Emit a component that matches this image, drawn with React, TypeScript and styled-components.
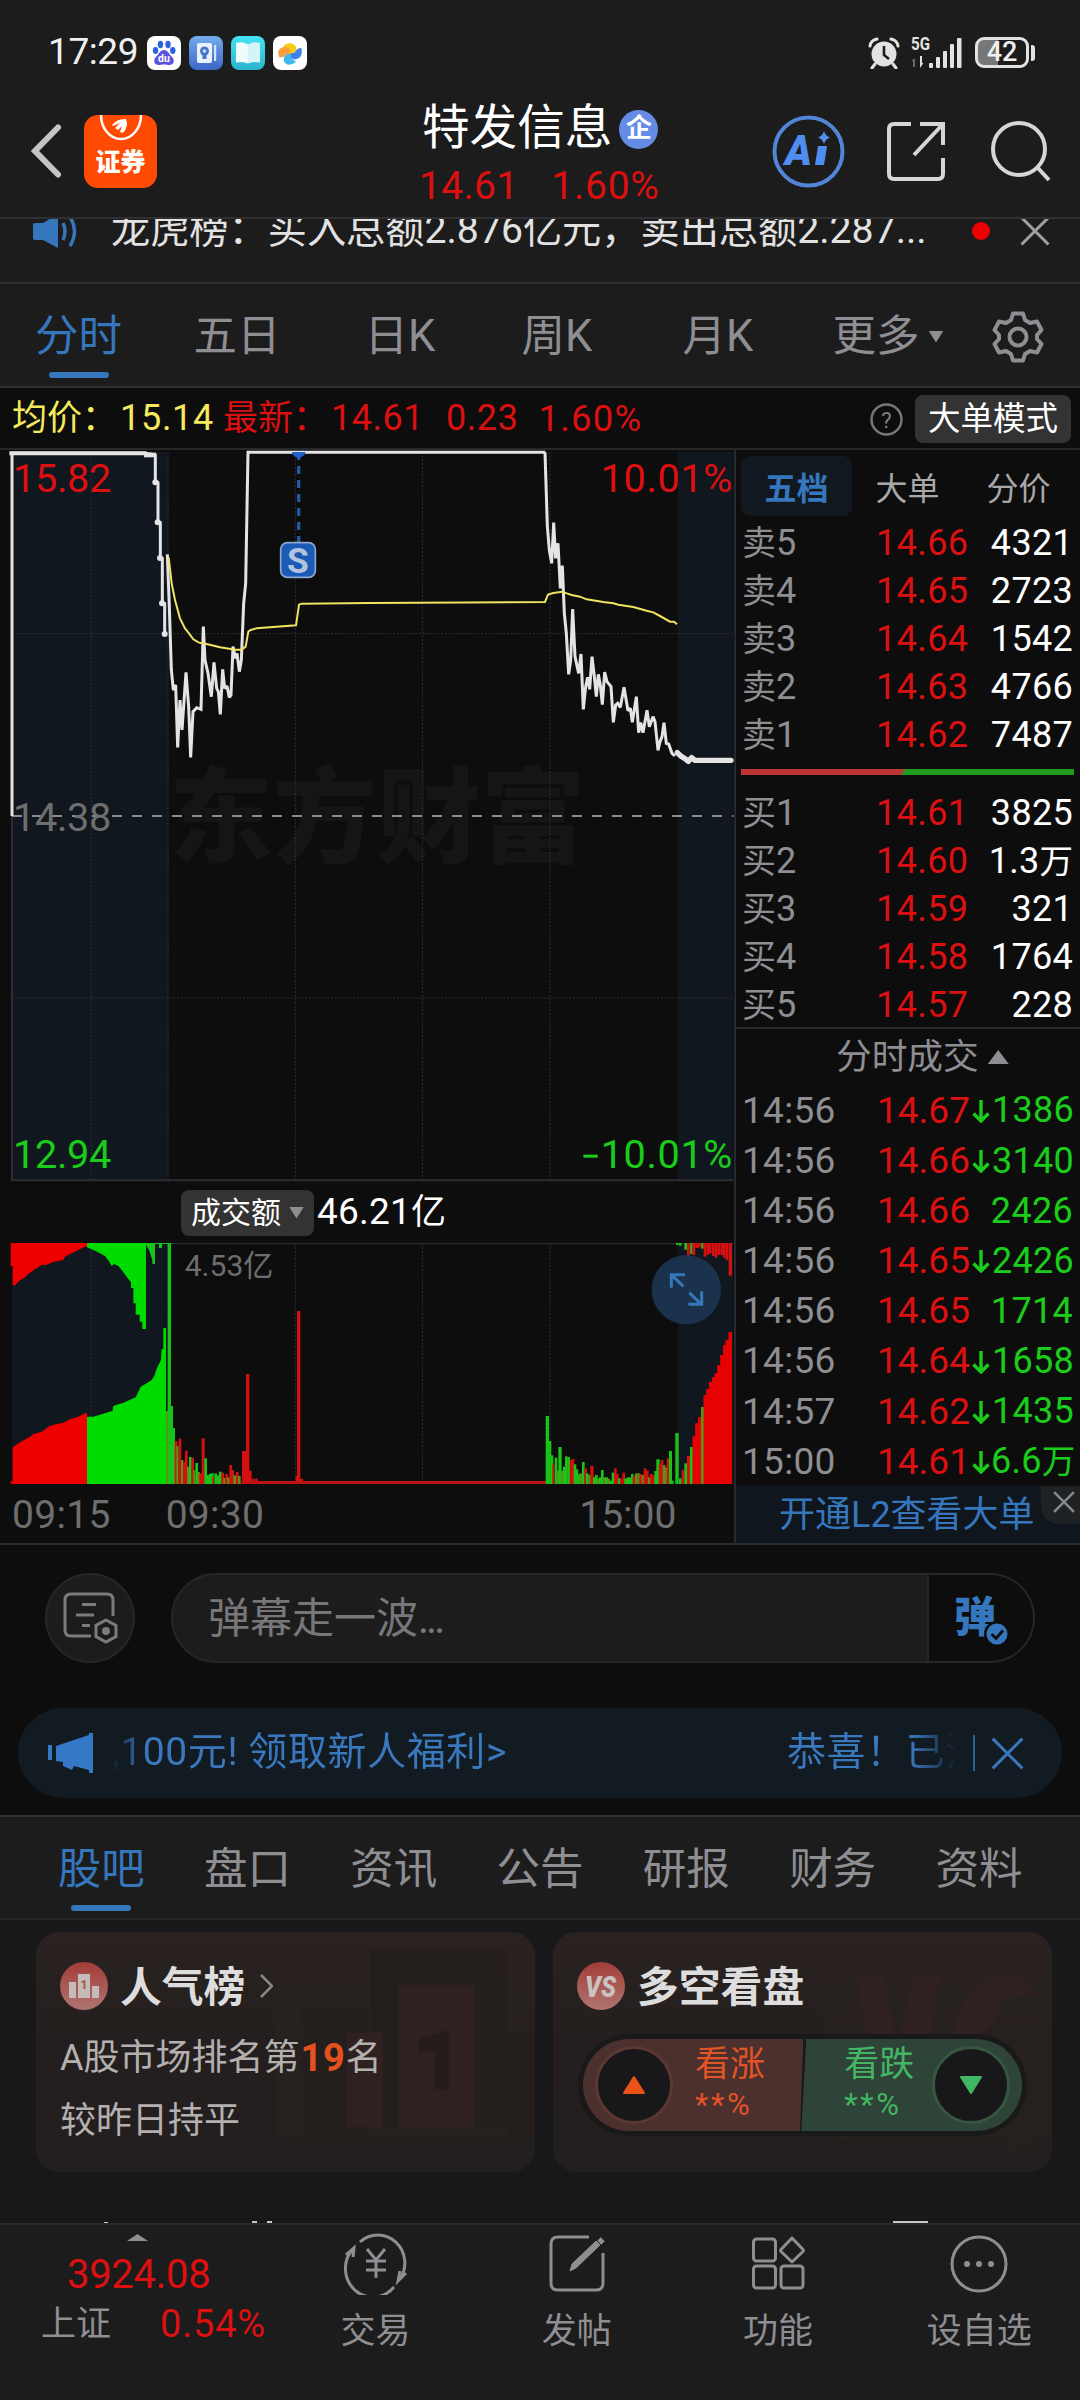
import React from "react";
import styled, { createGlobalStyle } from "styled-components";

const C = {
  bg: "#0d0d0d",
  panel: "#1c1c1c",
  line: "#303032",
  red: "#dc1010",
  green: "#1acd1a",
  blue: "#3576bd",
  gray: "#8e8e93",
  dim: "#6e6e6e",
  light: "#e2e2e2",
};

const GlobalStyle = createGlobalStyle`
  * { box-sizing: border-box; }
  html, body { margin: 0; padding: 0; background: ${C.bg}; }
  body { font-family: Roboto, "Noto Sans CJK SC", sans-serif; overflow: hidden; }
  svg { display: block; flex: none; }
`;

const Page = styled.div`
  width: 1080px;
  height: 2400px;
  display: flex;
  flex-direction: column;
  overflow: hidden;
  background: ${C.bg};
  color: #fff;
`;

interface TxtProps {
  $s: number;
  $c?: string;
  $w?: number;
  $ls?: number;
  $ml?: number;
}
const Txt = styled.span<TxtProps>`
  flex: none;
  font-size: ${(p) => p.$s}px;
  line-height: 1.2;
  color: ${(p) => p.$c ?? "#fff"};
  font-weight: ${(p) => p.$w ?? 400};
  letter-spacing: ${(p) => p.$ls ?? 0}px;
  margin-left: ${(p) => p.$ml ?? 0}px;
  white-space: pre;
`;

/* ---------- status bar ---------- */
const StatusBar = styled.div`
  height: 100px;
  flex: none;
  padding: 5px 45px 0 48px;
  display: flex;
  align-items: center;
  background: ${C.panel};
`;
const AppIcons = styled.div`
  display: flex;
  gap: 8px;
  margin-left: 9px;
`;
const StatusRight = styled.div`
  display: flex;
  align-items: center;
  margin-left: auto;
`;
const SignalBox = styled.svg`
  margin: 0 13px 0 11px;
  overflow: visible;
`;
const Battery = styled.div`
  width: 54px;
  height: 31px;
  border: 3px solid ${C.light};
  border-radius: 9px;
  display: flex;
  align-items: center;
  justify-content: center;
  background: linear-gradient(90deg, #777 0 42%, transparent 42%);
`;
const BatteryNub = styled.div`
  width: 4px;
  height: 16px;
  margin-left: 2px;
  border-radius: 0 3px 3px 0;
  background: ${C.light};
`;

/* ---------- header ---------- */
const Header = styled.header`
  height: 119px;
  flex: none;
  display: grid;
  grid-template-columns: 421px 1fr 310px;
  background: ${C.panel};
  border-bottom: 2px solid ${C.line};
`;
const HeaderLeft = styled.div`
  display: flex;
  padding: 15px 0 0 31px;
`;
const BackIcon = styled.svg`
  margin: 9px 22px 0 0;
`;
const HeaderMid = styled.div`
  display: flex;
  flex-direction: column;
`;
const TitleRow = styled.div`
  display: flex;
  align-items: center;
  height: 57px;
  padding: 1px 0 0 1px;
`;
const Badge = styled.div`
  width: 39px;
  height: 39px;
  margin-left: 7px;
  border-radius: 50%;
  background: #658ce4;
  display: flex;
  align-items: center;
  justify-content: center;
`;
const PriceRow = styled.div`
  display: flex;
  align-items: center;
  height: 46px;
  margin-top: 6px;
`;
const HeaderRight = styled.div`
  display: flex;
  padding-top: 15px;
`;

/* ---------- notice ---------- */
const Notice = styled.div`
  height: 65px;
  flex: none;
  overflow: hidden;
  background: ${C.panel};
  border-bottom: 2px solid ${C.line};
`;
const NoticeInner = styled.div`
  display: flex;
  align-items: center;
  height: 60px;
  margin-top: -18px;
  padding: 0 30px 0 33px;
`;
const Dot = styled.div`
  width: 18px;
  height: 18px;
  flex: none;
  border-radius: 50%;
  background: #ee0000;
  margin: 0 30px 0 auto;
`;

/* ---------- period tabs ---------- */
const Periods = styled.nav`
  height: 104px;
  flex: none;
  display: grid;
  grid-template-columns: 157px 160px 166px 148px 174px 166px 94px;
  background: ${C.panel};
  border-bottom: 2px solid ${C.line};
`;
const Tab = styled.div<{ $active?: boolean }>`
  display: flex;
  align-items: center;
  justify-content: center;
  padding-top: 3px;
  color: ${(p) => (p.$active ? C.blue : C.gray)};
  font-size: 43.5px;
  line-height: 99px;
  white-space: nowrap;
  position: relative;
  &::after {
    content: "";
    display: ${(p) => (p.$active ? "block" : "none")};
    position: absolute;
    bottom: 8px;
    width: 60px;
    height: 6px;
    border-radius: 3px;
    background: ${C.blue};
  }
`;
const Caret = styled.span<{ $up?: boolean; $w: number; $h: number; $ml: number }>`
  flex: none;
  width: ${(p) => p.$w}px;
  height: ${(p) => p.$h}px;
  margin-left: ${(p) => p.$ml}px;
  background: ${C.gray};
  clip-path: ${(p) => (p.$up ? "polygon(50% 0, 100% 100%, 0 100%)" : "polygon(0 0, 100% 0, 50% 100%)")};
`;

/* ---------- info row ---------- */
const InfoRow = styled.div`
  height: 62px;
  flex: none;
  display: flex;
  align-items: center;
  padding: 2px 9px 0 12px;
  border-bottom: 2px solid #282828;
`;
const Mode = styled.div`
  width: 156px;
  height: 48px;
  margin-left: 12px;
  border-radius: 8px;
  background: #333;
  display: flex;
  align-items: center;
  justify-content: center;
`;

/* ---------- main ---------- */
const Main = styled.section`
  height: 1095px;
  flex: none;
  display: grid;
  grid-template-columns: 734px 346px;
  border-bottom: 2px solid #2b2b2c;
`;
const ChartCol = styled.div`
  display: flex;
  flex-direction: column;
`;
const VolumeHead = styled.div`
  height: 61px;
  flex: none;
  display: flex;
  align-items: center;
  padding-left: 181px;
`;
const VolumeChip = styled.div`
  width: 133px;
  height: 46px;
  border-radius: 8px;
  background: #333;
  display: flex;
  align-items: center;
  padding-left: 10px;
`;
const Axis = styled.div`
  height: 57px;
  display: flex;
  align-items: center;
  padding: 4px 0 0 12px;
`;
const BookCol = styled.div`
  border-left: 2px solid #29292b;
  display: flex;
  flex-direction: column;
`;
const BookTabs = styled.div`
  display: grid;
  grid-template-columns: 111px 1fr 1fr;
  height: 60px;
  flex: none;
  margin: 6px 6px 2px 5px;
`;
const BookTab = styled.div<{ $active?: boolean }>`
  display: flex;
  align-items: center;
  justify-content: center;
  border-radius: 9px;
  font-size: 32px;
  font-weight: ${(p) => (p.$active ? 700 : 400)};
  background: ${(p) => (p.$active ? "#11181f" : "transparent")};
  color: ${(p) => (p.$active ? C.blue : "#a8a8a8")};
`;
const BookRow = styled.div`
  height: 48px;
  flex: none;
  display: grid;
  grid-template-columns: 134px 100px 1fr;
  align-items: center;
  padding: 3px 7px 0 6px;
`;
const TradeRow = styled(BookRow)`
  height: 50.13px;
  padding-top: 2px;
  grid-template-columns: 135px 95px 1fr;
`;
const Right = styled.div`
  display: flex;
  justify-content: flex-end;
  align-items: center;
`;
const RatioBar = styled.div`
  display: flex;
  height: 6px;
  flex: none;
  margin: 11px 6px 13px 5px;
  background: linear-gradient(125deg, #bd3534 0 48.6%, #1e9a1e 48.8%);
`;
const TradeHead = styled.div`
  height: 58px;
  flex: none;
  margin-top: -1px;
  border-top: 2px solid #29292b;
  display: flex;
  align-items: center;
  padding-left: 100px;
`;
const L2Bar = styled.div`
  flex: 1;
  display: flex;
  background: #10161d;
  padding: 3px 0 0 43px;
  align-items: center;
`;
const L2Close = styled.div`
  width: 39px;
  height: 38px;
  margin: -3px 0 0 auto;
  padding: 0 0 6px 6px;
  align-self: flex-start;
  border-radius: 0 0 0 18px;
  background: #1f2225;
  display: flex;
  align-items: center;
  justify-content: center;
`;

/* ---------- danmu ---------- */
const DanmuRow = styled.div`
  display: flex;
  flex: none;
  height: 90px;
  margin: 28px 45px 0 45px;
`;
const RoundButton = styled.div`
  width: 90px;
  height: 90px;
  border-radius: 50%;
  border: 2px solid #262626;
  background: ${C.panel};
  display: flex;
  align-items: center;
  justify-content: center;
`;
const DanmuField = styled.div`
  flex: 1;
  margin-left: 36px;
  display: flex;
  align-items: center;
  border: 2px solid #262626;
  border-radius: 45px;
  background: ${C.panel};
  overflow: hidden;
  padding-left: 35px;
`;
const DanmuHint = styled.div`
  display: flex;
  padding-top: 2px;
`;
const DanmuToggle = styled.div`
  width: 106px;
  height: 100%;
  margin-left: auto;
  padding-left: 25px;
  display: flex;
  align-items: center;
  background: ${C.bg};
  border-left: 2px solid #262626;
`;
const CheckBadge = styled.svg`
  margin: 32px 0 0 -12px;
`;

/* ---------- promo ---------- */
const Promo = styled.div`
  height: 90px;
  flex: none;
  margin: 45px 18px 17px;
  border-radius: 45px;
  background: #121a22;
  display: flex;
  align-items: center;
  padding: 0 38px 0 30px;
`;
const Marquee = styled.div`
  width: 850px;
  margin: -2px 0 0 17px;
  display: flex;
  overflow: hidden;
  mask-image: linear-gradient(90deg, transparent 0, #000 34px, #000 800px, transparent 846px);
`;
const VLine = styled.div`
  width: 2px;
  height: 36px;
  margin: 0 16px 0 13px;
  background: #2d6299;
`;

/* ---------- section tabs ---------- */
const Sections = styled.nav`
  height: 105px;
  flex: none;
  display: grid;
  grid-template-columns: repeat(7, 146.3px);
  padding-left: 28px;
  background: ${C.panel};
  border-top: 2px solid #323232;
  border-bottom: 2px solid #2b2728;
`;

/* ---------- cards ---------- */
const Cards = styled.section`
  height: 305px;
  flex: none;
  display: flex;
  flex-direction: column;
  justify-content: space-between;
  background: #18181a;
  border-bottom: 2px solid #2a2a28;
`;
const CardGrid = styled.div`
  display: grid;
  grid-template-columns: 499px 499px;
  column-gap: 18px;
  padding: 12px 0 0 36px;
`;
const Card = styled.div`
  height: 240px;
  border-radius: 24px;
  background: linear-gradient(180deg, #292221 0%, #241f1e 45%, #231f1e 100%);
  position: relative;
  overflow: hidden;
`;
const CardArt = styled.svg`
  position: absolute;
  right: 0;
  top: 0;
`;
const CardBody = styled.div`
  position: relative;
  padding: 26px 0 0 24px;
`;
const CardTitle = styled.div`
  display: flex;
  align-items: center;
  height: 56px;
`;
const CardName = styled.div`
  margin-left: 12px;
  padding-top: 3px;
  font-size: 41.8px;
  line-height: 50px;
  font-weight: 700;
  color: #dedddd;
`;
const CardLine = styled.div<{ $mt: number }>`
  display: flex;
  align-items: center;
  height: 50px;
  margin-top: ${(p) => p.$mt}px;
`;
const Vote = styled.div`
  display: flex;
  width: 449px;
  height: 102px;
  margin-top: 20px;
  margin-left: 1px;
  padding: 5px;
  border-radius: 51px;
  background: #1a191a;
`;
const VoteSide = styled.div<{ $down?: boolean }>`
  width: 223px;
  height: 92px;
  display: flex;
  align-items: center;
  background: ${(p) => (p.$down ? "#2f4438" : "#4b302e")};
  border-radius: ${(p) => (p.$down ? "0 46px 46px 0" : "46px 0 0 46px")};
  clip-path: ${(p) => (p.$down ? "polygon(5px 0, 100% 0, 100% 100%, 0 100%)" : "polygon(0 0, 100% 0, 217px 100%, 0 100%)")};
  margin-right: ${(p) => (p.$down ? 0 : -2)}px;
  padding-left: ${(p) => (p.$down ? 43 : 12)}px;
`;
const VoteCircle = styled.div<{ $down?: boolean }>`
  width: 78px;
  height: 78px;
  flex: none;
  border-radius: 50%;
  border: 3px solid ${(p) => (p.$down ? "#37563f" : "#5c3832")};
  background: #18181a;
  display: flex;
  align-items: center;
  justify-content: center;
  margin-left: ${(p) => (p.$down ? 18 : 0)}px;
`;
const VoteText = styled.div<{ $ml: number }>`
  display: flex;
  flex-direction: column;
  width: 70px;
  margin-left: ${(p) => p.$ml}px;
  margin-top: -3px;
`;

/* ---------- bottom nav ---------- */
const BottomNav = styled.nav`
  flex: 1;
  display: grid;
  grid-template-columns: 275px repeat(4, 201.2px);
  background: ${C.panel};
`;
const IndexCell = styled.div`
  display: flex;
  flex-direction: column;
  padding-top: 9px;
`;
const IndexRow = styled.div<{ $mt: number; $pl: number }>`
  display: flex;
  align-items: center;
  height: 46px;
  margin-top: ${(p) => p.$mt}px;
  padding-left: ${(p) => p.$pl}px;
`;
const NavItem = styled.div`
  display: flex;
  flex-direction: column;
  align-items: center;
  padding-top: 8px;
`;
const NavLabel = styled.div`
  margin-top: 16px;
  font-size: 35px;
  line-height: 42px;
  color: ${C.gray};
`;

/* ---------- chart data (three units per pixel) ---------- */
const AUCTION =
  "36,1128 36,40 435,40 466,44 466,127 474,127 474,247 481,247 481,354 487,354 487,490 494,490 494,582";
const PRICE_A =
  "502,343 508,500 514,690 520,750 527,735 533,922 540,780 546,870 558,697 566,800 572,952 579,815 590,803 603,808 610,560 615,660 624,700 634,770 642,667 650,745 655,755 661,823 668,688 674,745 681,738 688,772 693,765 699,620 706,655 711,640 718,695 724,660 731,490 737,430 744,37 1636,37";
const PRICE_B =
  "525,37 532,258 538,330 545,370 551,248 557,355 564,310 571,445 577,377 583,520 589,580 596,703 602,660 608,507 615,650 626,700 633,642 640,808 647,740 653,712 659,748 666,650 673,710 679,770 685,703 691,735 697,794 704,696 711,725 723,740 730,847 737,795 743,790 751,802 762,742 774,812 781,805 787,847 799,770 806,878 812,848 819,878 831,811 838,860 849,830 855,845 864,931 870,905 876,890 882,848 889,910 896,912 906,940 915,948";
const CLOSE_LINE = "922,938 935,950 944,955 955,964 965,953 975,961 1083,961";
const AVG_A =
  "506,352 515,430 525,480 540,535 555,565 567,580 580,598 597,608 620,612 660,622 706,629 725,629 737,620 745,575 752,570 770,565 888,556 897,494 905,491 1110,489";
const AVG_B =
  "0,489 525,486 534,464 550,459 576,455 590,460 605,465 630,470 650,478 700,486 730,490 745,494 790,501 830,512 850,517 870,528 900,545 912,545 921,553";
const STEPS = [[466, 127], [473, 247], [480, 354], [486, 490], [494, 582]];

type Bar = [number, number, "r" | "g" | "o", number?];
const BAR_FILL = { r: "#d41010", g: "#18c418", o: "#5f9016" };
const MORNING: Bar[] = [
  [498, 843, "o", 6], [503, 342, "g", 10], [511, 828, "g"], [517, 894, "g"], [524, 933, "r"], [529, 948, "o", 7], [536, 926, "r"],
  [543, 990, "o", 7], [549, 995, "r"], [555, 962, "r"], [561, 1010, "o", 6], [567, 981, "g"], [574, 983, "r"], [580, 1020, "o", 6],
  [586, 999, "g"], [592, 1026, "o"], [598, 1030, "r"], [605, 925, "r", 9], [613, 985, "g"], [619, 1035, "g"], [627, 1031, "g"],
  [633, 1030, "g"], [637, 1040, "r", 6], [643, 1030, "g"], [650, 1036, "g"], [657, 1025, "g"], [664, 1028, "r"], [670, 1044, "o"],
  [676, 1032, "r"], [682, 1042, "o"], [688, 1005, "r"], [694, 1020, "r"], [700, 1036, "o"], [708, 1026, "r"], [714, 1038, "o"],
  [726, 963, "r", 14], [738, 732, "r", 10], [747, 1022, "r"], [755, 1046, "r"], [765, 1046, "r"], [887, 1038, "r"],
  [891, 543, "r", 10], [901, 1046, "r"],
];
const AFTERNOON: Bar[] = [
  [527, 858, "g", 10], [536, 933, "g"], [542, 976, "g"], [547, 1000, "r", 6], [554, 983, "g"], [560, 1022, "o"], [565, 951, "g", 10],
  [573, 1022, "o"], [579, 1010, "g"], [585, 979, "g"], [592, 981, "g"], [599, 990, "r"], [605, 987, "r"], [611, 1003, "g"],
  [617, 1018, "g"], [623, 1033, "g"], [629, 1030, "o"], [636, 996, "g"], [643, 1015, "r"], [648, 1030, "g"], [655, 1035, "o"],
  [661, 1008, "r", 10], [669, 1042, "g"], [675, 1035, "g"], [681, 1045, "o"], [687, 1042, "g"], [693, 1020, "g"], [700, 1042, "o"],
  [706, 1042, "g"], [712, 1046, "o"], [719, 1052, "g"], [725, 1028, "g"], [732, 1015, "r"], [738, 1032, "r"], [744, 1045, "g"],
  [750, 1045, "r"], [757, 1028, "r"], [763, 1045, "g"], [770, 1042, "g"], [776, 1042, "g"], [783, 1032, "g"], [788, 1038, "r"],
  [795, 1030, "o"], [802, 1030, "o"], [808, 1032, "r"], [815, 1035, "o"], [821, 1015, "r"], [828, 1022, "r"], [834, 1042, "o"],
  [840, 1032, "r"], [847, 1036, "r"], [853, 1023, "g"], [859, 988, "g", 10], [866, 1003, "r"], [872, 990, "r"], [878, 1005, "o"],
  [884, 1012, "o"], [890, 985, "r"], [897, 963, "g", 9], [903, 1052, "g"], [916, 909, "g", 10], [927, 1045, "g"], [935, 1020, "r"],
  [943, 1000, "g"], [951, 978, "r", 9], [960, 951, "g", 9],
];
const CLOSE_BARS: Bar[] = [
  [968, 919, "r"], [976, 880, "r"], [984, 862, "r"], [993, 831, "o", 9], [1001, 795, "r"], [1009, 777, "r"], [1017, 755, "r"],
  [1026, 741, "r"], [1034, 730, "r"], [1042, 706, "r"], [1051, 675, "r"], [1059, 645, "r"], [1067, 630, "r"], [1076, 606, "r", 10],
];
const TOP_BARS: Bar[] = [
  [918, 345, "g"], [927, 347, "g"], [943, 359, "g"], [951, 387, "r"], [960, 372, "o"], [968, 375, "r"], [976, 354, "r"],
  [984, 352, "r"], [993, 356, "o"], [1001, 380, "r"], [1009, 375, "r"], [1017, 370, "r"], [1026, 378, "r"], [1034, 383, "r"],
  [1042, 375, "r"], [1051, 375, "r"], [1059, 383, "r"], [1067, 390, "r"], [1076, 437, "r", 10],
];
const GRID_X = [274, 504, 886, 1267, 1650];

function PriceChart() {
  return (
    <svg width="734" height="732" viewBox="0 30 2202 2196" fontFamily='Roboto, "Noto Sans CJK SC", sans-serif'>
      <rect x="36" y="36" width="470" height="2186" fill="#10171f" />
      <rect x="2033" y="36" width="167" height="2186" fill="#10171f" />
      <text x="507" y="1244" fontSize="312" fontWeight="900" fill="#151515">东方财富</text>
      <g stroke="#2c3034" strokeWidth="3" strokeDasharray="6 5">
        {GRID_X.map((x) => (
          <line key={x} x1={x} x2={x} y1="36" y2="2222" />
        ))}
        <line x1="36" x2="2200" y1="581" y2="581" />
        <line x1="36" x2="2200" y1="1674" y2="1674" />
      </g>
      <path d="M36 36V2221H2200" fill="none" stroke="#2e2e30" strokeWidth="6" />
      <line x1="36" x2="2200" y1="1128" y2="1128" stroke="#8c8c8c" strokeWidth="6" strokeDasharray="30 30" />
      <g fontSize="119">
        <text x="39" y="157" fill={C.red} textLength="295">15.82</text>
        <text x="39" y="1172" fill={C.dim} textLength="295">14.38</text>
        <text x="39" y="2185" fill={C.green} textLength="295">12.94</text>
        <text x="1802" y="157" fill={C.red} textLength="395">10.01%</text>
        <text x="1802" y="2185" fill={C.green} textLength="395">10.01%</text>
        <rect x="1750" y="2144" width="43" height="9" fill={C.green} />
      </g>
      <line x1="896" x2="896" y1="48" y2="308" stroke="#2259a3" strokeWidth="10" strokeDasharray="24 18" strokeDashoffset="12" />
      <g fill="none" stroke="#e4e4e4" strokeLinejoin="round">
        <polyline points={AUCTION} strokeWidth="9" />
        <polyline points="28,40 440,40" strokeWidth="12" />
        <polyline points="432,45 468,45" strokeWidth="14" />
        <polyline points={PRICE_A} strokeWidth="9" strokeLinejoin="miter" strokeMiterlimit="2" />
        <g transform="translate(1110 0)">
          <polyline points={PRICE_B} strokeWidth="9" strokeLinejoin="miter" strokeMiterlimit="2" />
          <polyline points={CLOSE_LINE} strokeWidth="16" strokeLinecap="round" />
        </g>
      </g>
      {STEPS.map(([x, y]) => (
        <circle key={y} cx={x} cy={y} r="9" fill="#e4e4e4" />
      ))}
      <g fill="none" stroke="#efe462" strokeWidth="6">
        <polyline points={AVG_A} />
        <polyline points={AVG_B} transform="translate(1110 0)" />
      </g>
      <path d="M876 36h40q0 12-20 19q-20-7-20-19z" fill="#1f62c8" />
      <rect x="842" y="308" width="104" height="104" rx="20" fill="#195bb6" stroke="#8fa7cc" strokeWidth="5" />
      <text x="894" y="398" fontSize="106" fontWeight="700" fill="#b3c3dd" textAnchor="middle">S</text>
    </svg>
  );
}

function bars(list: Bar[], top = false) {
  return list.map(([x, y, c, w], i) => (
    <rect key={i} x={x} y={top ? 339 : y} width={w ?? 8} height={top ? y - 339 : 1062 - y} fill={BAR_FILL[c]} />
  ));
}

function VolumeChart() {
  return (
    <svg width="734" height="242" viewBox="0 339 2202 726" fontFamily='Roboto, "Noto Sans CJK SC", sans-serif'>
      <rect x="36" y="339" width="470" height="723" fill="#10171f" />
      <rect x="2033" y="339" width="167" height="723" fill="#10171f" />
      <line x1="36" x2="2200" y1="341" y2="341" stroke="#2e2e30" strokeWidth="4" />
      <g stroke="#2c3034" strokeWidth="3" strokeDasharray="6 5">
        {GRID_X.map((x) => (
          <line key={x} x1={x} x2={x} y1="340" y2="1062" />
        ))}
      </g>
      <polygon fill="#ee0000" points="32,339 261,339 261,350 250,352 235,360 210,372 195,380 190,390 160,396 145,402 135,406 125,404 105,418 85,432 75,442 58,452 45,466 38,466 38,408 32,408" />
      <polygon fill="#00dc00" points="261,339 438,339 438,597 427,597 427,575 419,575 419,554 407,554 407,520 400,520 400,474 393,474 393,457 380,440 365,420 355,408 342,402 335,408 328,395 315,378 300,370 285,362 261,352" />
      <polygon fill="#18c418" points="438,339 515,339 515,342 486,342 486,354 477,354 477,342 465,342 465,402 457,402 457,390 453,378 447,360 442,352 438,345" />
      <polygon fill="#ee0000" points="32,1062 32,1053 38,1053 38,952 60,937 90,920 100,912 125,905 145,890 160,884 190,878 210,868 235,860 250,852 261,848 261,1062" />
      <polygon fill="#00dc00" points="261,860 280,860 300,854 338,842 340,828 370,818 407,802 415,785 422,770 440,760 455,750 463,738 470,716 478,700 483,690 485,657 490,657 490,594 498,594 498,1062 261,1062" />
      {bars(MORNING)}
      <rect x="724" y="1053" width="916" height="9" fill="#c01414" />
      <g transform="translate(1110 0)">
        {bars(AFTERNOON)}
        <path
          d="M968 1062V919h8V880h8V862h17V795h8V777h8V755h9V741h8V730h8V706h9V675h8V645h8V630h9V606h10V1062z"
          fill="#ee0000"
        />
        {CLOSE_BARS.map(([x, y, c, w]) => (
          <rect key={x} x={x} y={y} width={c === "o" ? w : 2} height={1062 - y} fill={c === "o" ? "#5f9016" : "#cc0808"} />
        ))}
        {bars(TOP_BARS, true)}
        <circle cx="949" cy="479" r="104" fill="#1c3450" fillOpacity="0.94" />
        <path
          d="M904 473V434H945M906 436L940 469M958 488L996 525M955 523H995V484"
          fill="none"
          stroke="#3576bd"
          strokeWidth="9"
        />
      </g>
      <text x="554" y="438" fontSize="90" fill={C.dim} textLength="266">4.53亿</text>
    </svg>
  );
}

const ASKS = [["卖5", "14.66", "4321"], ["卖4", "14.65", "2723"], ["卖3", "14.64", "1542"], ["卖2", "14.63", "4766"], ["卖1", "14.62", "7487"]];
const BIDS = [["买1", "14.61", "3825"], ["买2", "14.60", "1.3万"], ["买3", "14.59", "321"], ["买4", "14.58", "1764"], ["买5", "14.57", "228"]];
const TRADES: [string, string, string, boolean][] = [
  ["14:56", "14.67", "1386", true],
  ["14:56", "14.66", "3140", true],
  ["14:56", "14.66", "2426", false],
  ["14:56", "14.65", "2426", true],
  ["14:56", "14.65", "1714", false],
  ["14:56", "14.64", "1658", true],
  ["14:57", "14.62", "1435", true],
  ["15:00", "14.61", "6.6万", true],
];

const Amount = ({ value, color }: { value: string; color: string }) => {
  const unit = value.endsWith("万");
  return (
    <Txt $s={36} $c={color} $ls={0.3} $ml={unit ? 1 : 2}>
      {unit ? value.slice(0, -1) : value}
      {unit && <Txt $s={33.5} $c={color}>万</Txt>}
    </Txt>
  );
};

const BookLine = ({ row }: { row: string[] }) => (
  <BookRow>
    <Txt $s={36} $c={C.gray}>
      <Txt $s={34} $c={C.gray}>{row[0][0]}</Txt>
      {row[0][1]}
    </Txt>
    <Txt $s={36} $c={C.red} $ls={0.4}>{row[1]}</Txt>
    <Right>
      <Amount value={row[2]} color="#fff" />
    </Right>
  </BookRow>
);

const DownArrow = () => (
  <svg width="18" height="24" viewBox="0 0 18 24" fill="none" stroke={C.green} strokeWidth="3.4">
    <path d="M9 1V22M1.5 14.5L9 22L16.5 14.5" />
  </svg>
);

const Cross = ({ size, color, w = 3 }: { size: number; color: string; w?: number }) => (
  <svg width={size} height={size} viewBox="0 0 30 30" stroke={color} strokeWidth={(w * 30) / size}>
    <path d="M1.5 1.5L28.5 28.5M28.5 1.5L1.5 28.5" />
  </svg>
);

function AppIconRow() {
  return (
    <AppIcons>
      <svg width="34" height="34" viewBox="0 0 34 34">
        <rect width="34" height="34" rx="8" fill="#fff" />
        <g fill="#2a62e0">
          <ellipse cx="13.5" cy="8.5" rx="2.7" ry="3.7" />
          <ellipse cx="21" cy="8.5" rx="2.7" ry="3.7" />
          <ellipse cx="8.5" cy="14.5" rx="2.7" ry="3.4" />
          <ellipse cx="25.8" cy="14.5" rx="2.7" ry="3.4" />
          <path d="M17 14c4 0 5 4 8 7c3.500 3.500 1.500 8-2.500 8c-2 0-3-.5-5.500-.5s-3.500 .5-5.500 .5c-4 0-6-4.500-2.500-8c3-3 4-7 8-7z" fill="#5a55de" />
        </g>
        <text x="17" y="26" fontSize="10.500" fontWeight="700" fill="#fff" textAnchor="middle">du</text>
      </svg>
      <svg width="34" height="34" viewBox="0 0 34 34">
        <defs>
          <linearGradient id="ib" x2="0" y2="1"><stop stopColor="#74adea" /><stop offset="1" stopColor="#3c66c8" /></linearGradient>
          <linearGradient id="ic" x2="0" y2="1"><stop stopColor="#45e4f4" /><stop offset="1" stopColor="#2cb4cc" /></linearGradient>
        </defs>
        <rect width="34" height="34" rx="8" fill="url(#ib)" />
        <rect x="8" y="7" width="15" height="20" rx="2" fill="#eaf3fd" />
        <rect x="25" y="9" width="2.200" height="16" fill="#d3e4fa" />
        <circle cx="15.500" cy="15" r="4.500" fill="#4577cc" />
        <rect x="13.500" y="18" width="4" height="5" fill="#4577cc" />
        <circle cx="15.500" cy="15" r="1.800" fill="#cfe0f7" />
      </svg>
      <svg width="34" height="34" viewBox="0 0 34 34">
        <rect width="34" height="34" rx="8" fill="url(#ic)" />
        <path d="M5 7q7-2 12 1.500v19q-5-2.500-12-1z" fill="#effcfd" />
        <path d="M29 7q-7-2-12 1.500v19q5-2.500 12-1z" fill="#d4f5f8" />
      </svg>
      <svg width="34" height="34" viewBox="0 0 34 34">
        <rect width="34" height="34" rx="8" fill="#fff" />
        <path d="M10.500 10a7 6 0 0 1 12.500 1q1 6-5 8q-4-1-3.500-4q-4-1-4-5z" fill="#fbcb12" />
        <path d="M28.500 12q2 10-6 11.500q-5 0-6-4.500q2-3 5-2q2-5 7-5z" fill="#3d80ee" />
        <path d="M23 26q-9 6-12-1q-1-6 4-7.500q4 1 3 5q4 2 5 3.500z" fill="#3bb8ef" />
        <path d="M6 21q-3-9 5-10q5 0 6.500 4q-1 4-5 3q0 4-6.500 3z" fill="#fb9d3b" />
      </svg>
    </AppIcons>
  );
}

const NavIcon = ({ children }: { children: React.ReactNode }) => (
  <svg width="66" height="62" viewBox="0 0 66 62" fill="none" stroke={C.gray} strokeWidth="3">
    {children}
  </svg>
);

export default function App() {
  return (
    <Page>
      <GlobalStyle />

      <StatusBar>
        <Txt $s={37} $c="#f0f0f0" $ls={-0.4}>17:29</Txt>
        <AppIconRow />
        <StatusRight>
          <svg width="32" height="32" viewBox="0 0 32 32">
            <circle cx="16" cy="17" r="12.500" fill={C.light} />
            <path d="M2 9Q3 3 9 2M30 9Q29 3 23 2M7 27L4 31M25 27L28 31" fill="none" stroke={C.light} strokeWidth="3" strokeLinecap="round" />
            <path d="M16 9V18L21 22" fill="none" stroke={C.panel} strokeWidth="2.600" />
          </svg>
          <SignalBox width="51" height="31" viewBox="0 0 51 31">
            <text x="0" y="13" fontSize="17.500" fontWeight="700" fill={C.light} textLength="19" lengthAdjust="spacingAndGlyphs">5G</text>
            <g fill={C.light}>
              <path d="M4 21V30H2V24H0z" fill="#666" />
              <path d="M9 19V31L12.500 26H11V19z" />
              <rect x="18" y="26" width="4" height="5" rx="1" />
              <rect x="25" y="20" width="4" height="11" rx="1" />
              <rect x="32" y="14" width="4" height="17" rx="1" />
              <rect x="39" y="7" width="4" height="24" rx="1" />
              <rect x="46" y="1" width="4.500" height="30" rx="1" />
            </g>
          </SignalBox>
          <Battery>
            <Txt $s={27} $w={500} $c="#f0f0f0">42</Txt>
          </Battery>
          <BatteryNub />
        </StatusRight>
      </StatusBar>

      <Header>
        <HeaderLeft>
          <BackIcon width="31" height="54" viewBox="0 0 31 54" fill="none" stroke="#c4c4c4" strokeWidth="6" strokeLinecap="round">
            <path d="M27 3.500L4 27L27 50.500" />
          </BackIcon>
          <svg width="73" height="73" viewBox="0 0 73 73">
            <rect width="73" height="73" rx="14" fill="#ff4a03" />
            <path d="M17 0A20 24 0 0 0 57 0" fill="none" stroke="#fff" strokeWidth="2.500" />
            <path d="M28 10Q34 3 42 4Q45 11 39 18L36 17L38 11L34 15L31 13L36 8L29 11z" fill="#fff" />
            <text x="36.500" y="56" fontSize="25" fontWeight="800" fill="#fff" textAnchor="middle" fontFamily='"Noto Sans CJK SC", sans-serif'>证券</text>
          </svg>
        </HeaderLeft>
        <HeaderMid>
          <TitleRow>
            <Txt $s={47.6}>特发信息</Txt>
            <Badge>
              <Txt $s={26} $w={700}>企</Txt>
            </Badge>
          </TitleRow>
          <PriceRow>
            <Txt $s={39} $c={C.red} $ml={-2} $ls={0.3}>14.61</Txt>
            <Txt $s={39} $c={C.red} $ml={33} $ls={0.7}>1.60%</Txt>
          </PriceRow>
        </HeaderMid>
        <HeaderRight>
          <svg width="310" height="76" viewBox="770 115 310 76" fill="none">
            <circle cx="808.500" cy="151.500" r="34" stroke="#5285d6" strokeWidth="4" />
            <text x="785" y="165" fontSize="42" fontWeight="900" fill="#4f8df0" textLength="27" lengthAdjust="spacingAndGlyphs" fontStyle="italic">A</text>
            <path d="M818 146h9l-3 19h-9z" fill="#4f8df0" />
            <path d="M824 131q1.500 5 6 6.500q-4.500 1.500-6 6.500q-1.500-5-6-6.500q4.500-1.500 6-6.500z" fill="#4f8df0" />
            <g stroke="#d6d6d6" strokeWidth="4">
              <path d="M911 124H894Q889 124 889 129V174Q889 179 894 179H938Q943 179 943 174V158" />
              <path d="M920 124H943V145M943 124L914 155" />
              <circle cx="1019" cy="149" r="26" />
              <path d="M1037 167L1049 180" />
            </g>
          </svg>
        </HeaderRight>
      </Header>

      <Notice>
        <NoticeInner>
          <svg width="46" height="36" viewBox="0 0 46 36">
            <path d="M2 10H10L25 1V35L10 27H2Q0 27 0 25V12Q0 10 2 10z" fill={C.blue} />
            <path d="M30 10Q34 18 30 27M37 4Q46 18 37 33" fill="none" stroke={C.blue} strokeWidth="3.500" />
          </svg>
          <Txt $s={39.2} $c={C.light} $ml={32}>龙虎榜：买入总额2.876亿元，卖出总额2.287...</Txt>
          <Dot />
          <Cross size={30} color="#a0a0a0" />
        </NoticeInner>
      </Notice>

      <Periods>
        <Tab $active>分时</Tab>
        <Tab>五日</Tab>
        <Tab>日K</Tab>
        <Tab>周K</Tab>
        <Tab>月K</Tab>
        <Tab>
          更多
          <Caret $w={15} $h={12} $ml={9} />
        </Tab>
        <Tab>
          <svg width="52" height="52" viewBox="0 0 52 52" fill="none" stroke={C.gray} strokeWidth="4" strokeLinejoin="round">
            <path d="M21 2.500H31L33 9L38 12L45 10.500L49.500 19L45 24V28L49.500 33L45 41.500L38 40L33 43L31 49.500H21L19 43L14 40L7 41.500L2.500 33L7 28V24L2.500 19L7 10.500L14 12L19 9z" />
            <circle cx="26" cy="26" r="8.500" />
          </svg>
        </Tab>
      </Periods>

      <InfoRow>
        <Txt $s={35} $c="#f4ea5b">均价：</Txt>
        <Txt $s={36} $c="#f4ea5b" $ml={3} $ls={0.7}>15.14</Txt>
        <Txt $s={35} $c={C.red} $ml={9}>最新：</Txt>
        <Txt $s={36} $c={C.red} $ml={3} $ls={0.5}>14.61</Txt>
        <Txt $s={36} $c={C.red} $ml={22} $ls={0.6}>0.23</Txt>
        <Txt $s={36.5} $c={C.red} $ml={20} $ls={1.2}>1.60%</Txt>
        <StatusRight>
          <svg width="33" height="33" viewBox="0 0 33 33">
            <circle cx="16.500" cy="16.500" r="15" fill="none" stroke="#777" strokeWidth="2.500" />
            <text x="16.500" y="24.500" fontSize="22" fill="#808080" textAnchor="middle">?</text>
          </svg>
          <Mode>
            <Txt $s={32.5}>大单模式</Txt>
          </Mode>
        </StatusRight>
      </InfoRow>

      <Main>
        <ChartCol>
          <PriceChart />
          <VolumeHead>
            <VolumeChip>
              <Txt $s={30}>成交额</Txt>
              <Caret $w={15} $h={12} $ml={8} />
            </VolumeChip>
            <Txt $s={37} $ml={3} $ls={0.2}>
              46.21<Txt $s={35}>亿</Txt>
            </Txt>
          </VolumeHead>
          <VolumeChart />
          <Axis>
            <Txt $s={39} $c={C.dim} $ls={0.3}>09:15</Txt>
            <Txt $s={39} $c={C.dim} $ml={55} $ls={0.3}>09:30</Txt>
            <Txt $s={39} $c={C.dim} $ml={315}>15:00</Txt>
          </Axis>
        </ChartCol>
        <BookCol>
          <BookTabs>
            <BookTab $active>五档</BookTab>
            <BookTab>大单</BookTab>
            <BookTab>分价</BookTab>
          </BookTabs>
          {ASKS.map((r) => <BookLine key={r[0]} row={r} />)}
          <RatioBar />
          {BIDS.map((r) => <BookLine key={r[0]} row={r} />)}
          <TradeHead>
            <Txt $s={35.7} $c={C.gray}>分时成交</Txt>
            <Caret $up $w={21} $h={14} $ml={9} />
          </TradeHead>
          {TRADES.map((t, i) => (
            <TradeRow key={i}>
              <Txt $s={37} $c={C.gray} $ls={0.3}>{t[0]}</Txt>
              <Txt $s={37} $c={C.red}>{t[1]}</Txt>
              <Right>
                {t[3] && <DownArrow />}
                <Amount value={t[2]} color={C.green} />
              </Right>
            </TradeRow>
          ))}
          <L2Bar>
            <Txt $s={36} $c={C.blue}>开通L2查看大单</Txt>
            <L2Close>
              <Cross size={22} color="#8a8a8a" w={2.5} />
            </L2Close>
          </L2Bar>
        </BookCol>
      </Main>

      <DanmuRow>
        <RoundButton>
          <svg width="56" height="52" viewBox="0 0 56 52" fill="none" stroke="#7b7b7e" strokeWidth="3">
            <path d="M29 44H9Q3 44 3 38V8Q3 2 9 2H45Q51 2 51 8V24M20 12.500H34M14 23H32M20 33.500H28" />
            <path d="M44 28L54 33.500V44.500L44 50L34 44.500V33.500z" />
            <circle cx="44" cy="39" r="2.500" fill="#7b7b7e" />
          </svg>
        </RoundButton>
        <DanmuField>
          <DanmuHint>
            <Txt $s={42} $c="#77777a">弹幕走一波</Txt>
            <Txt $s={42} $c="#77777a" $ls={-3}>...</Txt>
          </DanmuHint>
          <DanmuToggle>
            <Txt $s={42} $w={800} $c={C.blue}>弹</Txt>
            <CheckBadge width="26" height="26" viewBox="0 0 26 26">
              <circle cx="13" cy="13" r="13" fill={C.bg} />
              <circle cx="13" cy="13" r="10.500" fill={C.blue} />
              <path d="M7.500 13L12 17.500L19 9.500" fill="none" stroke={C.bg} strokeWidth="2.800" />
            </CheckBadge>
          </DanmuToggle>
        </DanmuField>
      </DanmuRow>

      <Promo>
        <svg width="46" height="40" viewBox="0 0 46 40" fill="#3478c6">
          <rect x="0" y="12" width="4" height="15" />
          <path d="M8 13L41 2V0H45V40H41V37L26 33L24 37L15 33V29L8 28z" />
        </svg>
        <Marquee>
          <Txt $s={39} $c="#3a78bd" $ml={1} $ls={0.6}>,100元! 领取新人福利&gt;</Txt>
          <Txt $s={39} $c="#3a78bd" $ml={280} $ls={0.6}>恭喜！已注</Txt>
        </Marquee>
        <VLine />
        <Cross size={33} color="#3a78bd" />
      </Promo>

      <Sections>
        <Tab $active>股吧</Tab>
        {["盘口", "资讯", "公告", "研报", "财务", "资料"].map((t) => <Tab key={t}>{t}</Tab>)}
      </Sections>

      <Cards>
        <CardGrid>
          <Card>
            <CardArt width="260" height="240" viewBox="0 0 260 240">
              <path d="M0 205V38H55V0H260V205z" fill="#2b2421" opacity="0.4" />
              <path d="M95 18H232V195H95zM27 75H92V205H27zM232 100H260V205H232z" fill="#241e1d" />
              <path d="M124 53H200V195H124zM72 101H108V195H72z" fill="#2f2120" />
              <path d="M144 106L174 98V158H160V118L144 122z" fill="#251d1c" />
            </CardArt>
            <CardBody>
              <CardTitle>
                <svg width="48" height="48" viewBox="0 0 48 48">
                  <defs>
                    <linearGradient id="badge" x2="0" y2="1"><stop stopColor="#a23d38" /><stop offset="1" stopColor="#b07570" /></linearGradient>
                  </defs>
                  <circle cx="24" cy="24" r="24" fill="url(#badge)" />
                  <path d="M9 20h7v16H9zM18 12h12v24H18zM32 24h7v12h-7z" fill="#c4bcba" />
                  <text x="24" y="27" fontSize="13" fontWeight="700" fill="#a8554f" textAnchor="middle">1</text>
                </svg>
                <CardName>人气榜</CardName>
                <svg width="28" height="24" viewBox="0 0 28 24" fill="none" stroke="#8b8786" strokeWidth="2.500">
                  <path d="M16 1L27 12L16 23" />
                </svg>
              </CardTitle>
              <CardLine $mt={20}>
                <Txt $s={36} $c="#b3b0af">A股市场排名第</Txt>
                <Txt $s={38} $w={700} $c="#e5501f" $ls={0.8} $ml={1}>19</Txt>
                <Txt $s={36} $c="#b3b0af">名</Txt>
              </CardLine>
              <CardLine $mt={13}>
                <Txt $s={36} $c="#b3b0af">较昨日持平</Txt>
              </CardLine>
            </CardBody>
          </Card>

          <Card>
            <CardArt width="260" height="240" viewBox="0 0 260 240">
              <path d="M18 0H260V200Q240 215 215 222L215 205H60L45 212z" fill="#2b2421" opacity="0.4" />
              <path d="M64 42H92L103 102H74zM108 102L122 42H148L140 102z" fill="#2f2120" />
              <path d="M246 62Q228 36 200 44Q172 52 160 102H190Q214 80 206 72Q222 62 246 62z" fill="#2f2120" />
            </CardArt>
            <CardBody>
              <CardTitle>
                <svg width="48" height="48" viewBox="0 0 48 48">
                  <circle cx="24" cy="24" r="24" fill="url(#badge)" />
                  <text x="8" y="35" fontSize="30" fontWeight="900" fontStyle="italic" fill="#c9c2c0" textLength="31" lengthAdjust="spacingAndGlyphs">VS</text>
                </svg>
                <CardName>多空看盘</CardName>
              </CardTitle>
              <Vote>
                <VoteSide>
                  <VoteCircle>
                    <svg width="24" height="20" viewBox="0 0 24 20"><path d="M12 2L22 18H2z" fill="#ea5218" stroke="#ea5218" strokeWidth="2" strokeLinejoin="round" /></svg>
                  </VoteCircle>
                  <VoteText $ml={22}>
                    <Txt $s={35} $c="#e05426">看涨</Txt>
                    <Txt $s={31} $c="#e05426" $ls={2.6}>**%</Txt>
                  </VoteText>
                </VoteSide>
                <VoteSide $down>
                  <VoteText $ml={0}>
                    <Txt $s={35} $c="#44b564">看跌</Txt>
                    <Txt $s={31} $c="#44b564" $ls={2.6}>**%</Txt>
                  </VoteText>
                  <VoteCircle $down>
                    <svg width="24" height="20" viewBox="0 0 24 20"><path d="M2 2H22L12 18z" fill="#3fb765" stroke="#3fb765" strokeWidth="2" strokeLinejoin="round" /></svg>
                  </VoteCircle>
                </VoteSide>
              </Vote>
            </CardBody>
          </Card>
        </CardGrid>
        <svg width="1080" height="3" viewBox="0 0 1080 3" fill="#c8c8c8">
          <path d="M104 2h4v1h-4zM252 1h5v2h-5zM267 1h5v2h-5zM893 1h35v2h-35z" />
        </svg>
      </Cards>

      <BottomNav>
        <IndexCell>
          <Caret $up $w={21} $h={7} $ml={127} />
          <IndexRow $mt={11} $pl={67}>
            <Txt $s={40} $c={C.red} $ls={-0.3}>3924.08</Txt>
          </IndexRow>
          <IndexRow $mt={4} $pl={41}>
            <Txt $s={35} $c={C.gray}>上证</Txt>
            <Txt $s={38} $c={C.red} $ml={49} $ls={0.8}>0.54%</Txt>
          </IndexRow>
        </IndexCell>
        <NavItem>
          <NavIcon>
            <path d="M17 9A27 28 0 0 1 57 46M51 54A27 28 0 0 1 9 17" />
            <path d="M3 22L11 15L10 24M63 40L55 48L57 38" />
            <path d="M24 16L33 27L42 16M33 27V45M23 28H43M23 37H43" />
          </NavIcon>
          <NavLabel>交易</NavLabel>
        </NavItem>
        <NavItem>
          <NavIcon>
            <path d="M45 4H14Q7 4 7 11V50Q7 57 14 57H52Q59 57 59 50V20" />
            <path d="M26 38L28 31L52 8L56 12L32 35z" fill={C.gray} strokeWidth="1" />
            <path d="M55 6L59 10" strokeWidth="5" />
          </NavIcon>
          <NavLabel>发帖</NavLabel>
        </NavItem>
        <NavItem>
          <NavIcon>
            <rect x="8.500" y="6" width="22" height="22" rx="3" />
            <rect x="8.500" y="33" width="22" height="22" rx="3" />
            <rect x="36" y="33" width="22" height="22" rx="3" />
            <path d="M47 5L58 16.500Q59 17.500 58 18.500L47 29L36 18.500Q35 17.500 36 16.500z" strokeLinejoin="round" />
          </NavIcon>
          <NavLabel>功能</NavLabel>
        </NavItem>
        <NavItem>
          <NavIcon>
            <circle cx="33" cy="31" r="27" />
            <g fill={C.gray} stroke="none">
              <circle cx="21" cy="31" r="3" />
              <circle cx="33" cy="31" r="3" />
              <circle cx="45" cy="31" r="3" />
            </g>
          </NavIcon>
          <NavLabel>设自选</NavLabel>
        </NavItem>
      </BottomNav>
    </Page>
  );
}
